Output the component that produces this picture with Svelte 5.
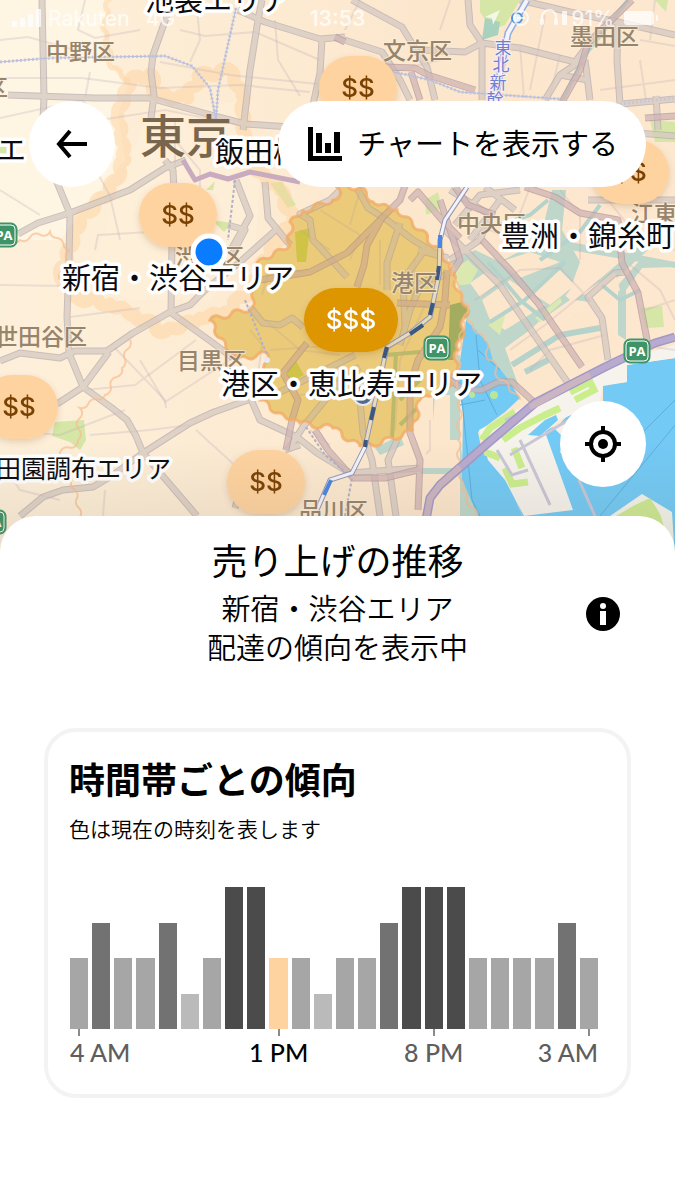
<script>
	const levels = [2, 3, 2, 2, 3, 1, 2, 4, 4, 2, 2, 1, 2, 2, 3, 4, 4, 4, 2, 2, 2, 2, 3, 2];
	const current = 9;
	const ticks = [
		{ hour: 0, label: '4 AM' },
		{ hour: 9, label: '1 PM' },
		{ hour: 16, label: '8 PM' },
		{ hour: 23, label: '3 AM' }
	];

	const pins = [
		{ x: 358, y: 88, text: '$$' },
		{ x: 178, y: 215, text: '$$' },
		{ x: 630, y: 172, text: '$$' },
		{ x: 19, y: 407, text: '$$' },
		{ x: 266, y: 482, text: '$$' },
		{ x: 351, y: 320, text: '$$$', hot: true }
	];

	const wards = [
		{ x: 46, y: 60, text: '中野区' },
		{ x: 383, y: 59, text: '文京区' },
		{ x: 570, y: 45, text: '墨田区' },
		{ x: -15, y: 96, text: '区' },
		{ x: 175, y: 265, text: '渋谷区' },
		{ x: 457, y: 232, text: '中央区' },
		{ x: 631, y: 222, text: '江東区' },
		{ x: 391, y: 291, text: '港区' },
		{ x: -5, y: 345, text: '世田谷区' },
		{ x: 177, y: 369, text: '目黒区' },
		{ x: 299, y: 519, text: '品川区' }
	];

	const areas = [
		{ x: 145, y: 11, text: '池袋エリア' },
		{ x: -3, y: 161, text: 'エ' },
		{ x: 215, y: 163, text: '飯田橋' },
		{ x: 501, y: 247, text: '豊洲・錦糸町' },
		{ x: 62, y: 289, text: '新宿・渋谷エリア' },
		{ x: 221, y: 395, text: '港区・恵比寿エリア' },
		{ x: -4, y: 478, text: '田園調布エリア', small: true }
	];

	const parkingAreas = [
		{ x: 4, y: 235 },
		{ x: 437, y: 348 },
		{ x: 637, y: 351 },
		{ x: -7, y: 522 }
	];

	const streets = [
		'M0 40 L28 37 L75 50 M85 0 L78 30 L95 38 L140 30 M90 72 L85 98 M100 120 L82 100 L0 118',
		'M0 78 L82 78 L160 88 L240 85 L310 92 M180 30 L205 36 L255 32 L320 60 M160 62 L230 75 L318 84',
		'M196 0 L200 40 L190 62 M275 20 L278 60 L300 96 M0 190 L40 215 M95 250 L98 235 L150 232',
		'M80 140 L110 196 L120 240 M100 120 L165 110 L235 124 M175 140 L200 170 L200 210',
		'M0 285 L66 286 M70 317 L140 308 M115 348 L165 400 L166 408 M85 390 L135 385 L196 340',
		'M140 360 L165 402 L245 350 M0 430 L60 435 L125 410 M90 435 L150 430 L190 425 M196 430 L240 470',
		'M105 490 L103 516 M0 460 L20 490 L60 500 M250 330 L262 345 L255 395 M175 120 L175 165',
		'M262 295 L270 265 L303 272 M265 320 L300 350 L340 355 M320 210 L360 235 L350 260',
		'M270 350 L340 345 M300 230 L330 250 M360 190 L350 225 M380 240 L380 285 M415 260 L412 310',
		'M390 310 L388 350 L370 400 M425 305 L400 360 L395 430 M300 395 L350 390 M310 430 L330 445',
		'M360 0 L345 30 M370 100 L400 70 L440 60 M450 0 L440 30 M500 65 L495 100 M520 45 L524 98',
		'M545 15 L530 90 M560 55 L550 95 M640 40 L675 46 M640 60 L646 100 M600 90 L675 80 M655 0 L650 40',
		'M530 187 L510 240 L480 225 M560 190 L580 215 L580 260 M600 190 L640 240 L675 250',
		'M475 300 L520 270 L560 268 L590 300 M510 350 L545 325 L600 280 M530 370 L550 350 L605 335 M430 420 L430 450 L426 454',
		'M630 265 L660 290 L675 320 M645 310 L675 300 M640 345 L675 350'
	];

	const roads = [
		'M42 0 L44 97 L43 120 M56 180 L70 214 L69 260 L67 317 L69 353 L83 387 L112 408 L127 420 L136 436 L143 453 L197 516',
		'M8 95 L95 98 L150 98 L200 112 L245 124 L290 127',
		'M169 0 L166 18 L153 55 L151 72 L154 95 L151 118',
		'M262 0 L258 20 L250 70 L243 130 M238 10 L265 22 L320 39 L345 37 M322 39 L320 73 L313 105',
		'M18 234 L38 223 L70 213 L130 190 L165 168 L186 160 M165 160 L173 170 L174 190 M172 240 L171 312',
		'M0 361 L20 353 L60 358 L75 351 L107 351 L133 333 L170 312 L190 305 L205 290 L240 262 L278 228',
		'M109 352 L83 387 L57 404 M170 312 L213 343 L233 358',
		'M143 453 L190 423 L214 412 L248 400 M20 516 L43 497 L63 490 L93 487 L113 475 L143 453',
		'M236 180 L250 216 L232 248 M265 182 L268 218 L290 245 M228 225 L245 230 L232 255',
		'M250 397 L260 420 L297 437 L317 453 L350 473 L420 468',
		'M340 190 L330 200 L300 214 L310 220 L313 240 L347 277 M357 188 L368 208 L387 220 L413 240 L447 260',
		'M250 307 L263 323 L280 325 L292 318 L303 327 M400 223 L387 263 L387 290 M427 247 L403 280 L405 327',
		'M418 250 L448 258 M446 275 L422 282 L410 310 L400 345 M360 367 L345 375 L325 400 L303 427 L288 450 M355 355 L335 365 L280 392',
		'M360 400 L363 433 L372 460 L380 516 M397 440 L388 460 L396 516 M300 445 L285 450',
		'M335 37 L382 52 L400 80 L410 100 M352 0 L402 27 L416 50 L427 67 L435 100',
		'M468 0 L470 25 L482 43 L482 100 M420 50 L465 52 L482 43 L520 48 L575 62 L588 45',
		'M618 20 L617 60 L620 104 M582 60 L560 75 L545 100 M585 60 L590 100 M560 75 L588 80',
		'M520 0 L570 12 L618 22 L675 35 M622 104 L675 99 M656 96 L658 130 M600 130 L675 136',
		'M442 227 L475 260 L500 285 L522 317 L545 350 L568 383 M588 200 L675 200',
		'M625 272 L615 273 L588 297 L602 318 L608 360 M455 225 L480 195 L520 190 M470 240 L500 200 M485 187 L515 210',
		'M235 508 L240 490 M450 190 L490 215 L480 240 L450 260'
	];

	const trunks = [
		'M407 180 L400 200 L382 218 L347 253 L310 272 L260 280',
		'M382 218 L367 245 L364 265 L357 287 M397 303 L450 305 M307 343 L283 373 L298 400 L292 420 L286 450',
		'M447 270 L445 300 L440 327 L418 360 L410 387 L410 433 L420 460 L418 510',
		'M315 430 L328 450 L353 478 L385 478 L418 470 M410 200 L418 192 L442 220 L460 238',
		'M385 67 L415 68 L428 75 L475 90 M411 72 L420 100 M335 37 L345 42',
		'M632 0 L588 43 L580 70 L562 102 M645 118 L675 116',
		'M525 187 L555 197 L580 213 L618 220 L622 263 L638 293 L648 345',
		'M482 240 L510 270 L538 303 L560 335 L582 367 M455 187 L468 205 L495 215 M440 200 L460 260 L450 275',
		'M445 377 L465 390 L482 390 L498 382 L512 382 L535 403'
	];

	// minato area outline, drawn with a scalloped edge
	const minato = [
		[337, 187], [333, 200], [303, 211], [290, 222], [290, 245], [257, 263], [252, 308], [210, 320],
		[220, 338], [237, 360], [267, 353], [262, 400], [277, 413], [300, 423], [333, 428], [360, 447],
		[382, 442], [413, 431], [420, 400], [452, 384], [458, 350], [467, 307], [457, 290], [450, 263],
		[420, 230], [397, 210], [373, 202], [360, 187]
	];
	const shinjuku = [
		[130, 80], [150, 74], [157, 95], [188, 98], [198, 76], [230, 70], [242, 95], [245, 160],
		[280, 190], [293, 220], [270, 250], [250, 290], [225, 312], [200, 318], [165, 332], [135, 315],
		[110, 304], [78, 298], [60, 275], [80, 220], [110, 190], [125, 160], [118, 115]
	];
	const west = [
		[110, -10], [104, 30], [112, 68], [130, 80]
	];
	const setagaya = [
		[60, 280], [70, 250], [50, 232], [20, 240], [-10, 245]
	];
	const southwest = [
		[130, 340], [122, 368], [105, 395], [80, 408], [78, 440], [60, 455], [75, 490], [82, 525]
	];
	const coast = [
		[450, 262], [458, 290], [468, 305], [460, 340], [458, 370], [460, 410], [458, 440], [462, 490], [482, 525]
	];
	const bay = [
		[467, 320], [485, 340], [489, 360], [503, 380], [520, 400]
	];

	function scallop(points, closed) {
		const list = closed ? [...points, points[0]] : points;
		let d = `M${list[0][0]} ${list[0][1]}`;
		for (let i = 1; i < list.length; i++) {
			const [x0, y0] = list[i - 1];
			const [x1, y1] = list[i];
			const n = Math.max(1, Math.round(Math.hypot(x1 - x0, y1 - y0) / 10));
			for (let k = 1; k <= n; k++) {
				d += ` A7 7 0 0 ${k % 2} ${x0 + ((x1 - x0) * k) / n} ${y0 + ((y1 - y0) * k) / n}`;
			}
		}
		return closed ? d + 'Z' : d;
	}

	function tickAlign(i) {
		if (i === 0) return 'start';
		return i === ticks.length - 1 ? 'end' : 'center';
	}
</script>

<svelte:head>
	<title>売り上げの推移</title>
</svelte:head>

<main>
	<section class="map-area">
		<svg class="map" viewBox="0 0 675 556" preserveAspectRatio="xMidYMid slice" role="img" aria-label="東京">
			<defs>
				<linearGradient id="land" x1="0" x2="1" y1="0" y2="0">
					<stop offset="0" stop-color="#fdf0da" />
					<stop offset="0.3" stop-color="#fdecd4" />
					<stop offset="0.65" stop-color="#fce7cd" />
					<stop offset="1" stop-color="#fce8cf" />
				</linearGradient>
				<linearGradient id="shade" x1="0" x2="0" y1="0" y2="1">
					<stop offset="0" stop-color="#6b5a4a" stop-opacity="0" />
					<stop offset="1" stop-color="#6b5a4a" stop-opacity="0.14" />
				</linearGradient>
				<filter id="drop" x="-20%" y="-20%" width="140%" height="150%">
					<feDropShadow dx="0" dy="3" stdDeviation="3" flood-color="#7a4a10" flood-opacity="0.2" />
				</filter>
				<clipPath id="minato-clip"><path d={scallop(minato, true)} /></clipPath>
			</defs>
			<rect width="675" height="556" fill="url(#land)" />
			<path d="M0 0H110L104 30L112 68L128 85L118 115L125 160L100 190L75 220L60 240L20 240L0 245Z" fill="#fef5e3" />
			<path d="M145 120L240 100L245 150L260 185L255 250L210 300L130 300L90 280L110 210Z" fill="#fef0d8" opacity="0.7" />

			<!-- parks -->
			<g fill="#d5e6a6">
				<path d="M480 0H520L505 25L492 30L480 12Z" />
				<path d="M485 18L500 22L498 35L482 40Z" fill="#a8d2bd" />
				<path d="M270 183L282 182L296 205L288 208Z M206 190L215 181L213 190Z M212 220L232 223L224 232Z" />
				<path d="M55 422L84 420L86 440L80 450L70 442L52 436Z" />
				<path d="M425 200L438 192L442 208L426 215Z M650 120L675 122V142H655Z M640 308L662 306L664 327L646 328Z" />
				<path d="M0 145L10 142L8 155L0 156Z M655 0L668 0L666 12Z" />
			</g>

			<!-- rivers and tinted port water -->
			<g fill="#bfd6ca">
				<path d="M450 262L475 250L500 262L540 240L552 190H566L562 230L580 262L570 290L562 300L530 330L505 348L520 390L500 380L488 345L466 320L460 290Z" />
				<path d="M500 335L560 290L570 300L505 345Z M520 360L575 325L600 330L570 345L530 375Z" />
				<path d="M574 315L590 322L600 335L590 345L580 330Z M575 300L640 245L648 250L590 302Z" />
				<path d="M618 285L640 260L675 262V267L642 268L626 290L626 340L618 335Z M560 240L675 262V268L570 250Z" />
				<path d="M433 355H460V520H480L465 480L460 440L433 440Z M395 350L402 440H396L390 350Z M380 355L415 350V355L380 360Z" />
				<path d="M375 448L400 435L404 445L380 455Z M420 468H455V474H420Z" />
			</g>
			<g fill="#fce6cc">
				<path d="M482 300L510 280L545 305L505 330L490 320Z M470 283L486 272L502 280L480 297Z M500 262L530 252L560 262L520 278Z M512 355L580 312L620 340L545 392L520 385Z M530 292L560 270L575 285L550 305Z M582 293L615 272L620 290L600 310Z M435 395H450V460H430Z" />
			</g>
			<g fill="#dbe9b0">
				<path d="M452 270L468 260L478 270L470 284L455 286Z M488 325L505 315L500 335Z" />
				<path d="M535 318L560 298L562 302L540 322Z" />
			</g>
			<g fill="none" stroke="#b5d3cb" stroke-width="4">
				<path d="M488 262L520 300L545 320 M565 262L525 300L490 322 M540 260L580 232L600 205 M602 285L620 300L640 290 M548 200L530 215L500 225" />
				<path d="M512 365L560 335L600 328 M525 372L548 360" stroke-width="6" />
				<path d="M628 0L585 55L560 105" />
			</g>

			<!-- open sea -->
			<g fill="#73caf5">
				<path d="M466 320L488 343L493 360L507 378L520 398L505 412L478 432L482 452L496 462L508 482L524 520V560H484L480 520L462 480L463 413L457 380L462 347Z" />
				<path d="M603 385L627 382V365L675 358V560H590L572 516L560 480L545 440L568 415L603 402Z" />
			</g>
			<path d="M508 480L530 435L560 425L600 445L625 520H524Z" fill="#73caf5" />
			<path d="M479 430L535 400L605 365L675 345V358L627 365V382L603 386L600 402L560 420L545 432L573 510L524 516L505 480L488 460Z" fill="#f6f3ec" />
			<path d="M553 427L566 440L560 452L590 480L600 460L590 430L575 418Z" fill="#f4f3ee" />
			<path d="M528 435L545 420L556 415L558 420L540 436Z" fill="#73caf5" />
			<path d="M610 516L642 494L672 512L675 560H600Z" fill="#f3f3ea" />
			<path d="M616 516L635 505L650 498L660 514L665 530H610Z" fill="#cdea93" />
			<g fill="none" stroke="#cbee8d" stroke-width="7">
				<path d="M482 440L490 428L515 412 M485 452L500 458 M503 440L520 428L545 415L560 408 M570 392L590 382L594 390L575 400 M505 468L512 484L528 482 M514 448L522 468" />
			</g>
			<g fill="none" stroke="#c9c6d6" stroke-width="3">
				<path d="M497 450L512 475L528 470 M520 440L550 505 M510 455L560 425L585 412 M505 420L530 410 M579 480L595 516" />
			</g>
			<g fill="none" stroke="#5eaedd" stroke-width="1">
				<path d="M476 335L480 380L497 415 M460 405L485 400 M462 400L472 500L480 516 M600 516L675 425 M635 440L675 400 M478 350L500 370" />
			</g>

			<!-- area overlays -->
			<g fill="none" stroke="#fdd3a0" stroke-opacity="0.5" stroke-width="13" stroke-linejoin="round">
				<path d={scallop(shinjuku, true)} />
				<path d={scallop(west, false)} stroke-width="5" />
			</g>
			<path d={scallop(minato, true)} fill="#f3dca0" />
			<g clip-path="url(#minato-clip)">
				<path d="M295 232L310 228L306 262L297 262Z M287 370L296 361L304 375L290 382Z" fill="#cdd25c" />
				<path d="M450 305L470 300L464 360L448 360Z" fill="#94b27c" />
				<path d="M385 355L420 352 M396 352L392 440 M420 380L400 400 M425 400L400 425" fill="none" stroke="#b5c48c" stroke-width="4" />
			</g>

			{#each streets as d}
				<path class="street" {d} />
			{/each}
			<g opacity="0.75">
				{#each roads as d}
					<path class="road-edge" {d} />
				{/each}
				{#each roads as d}
					<path class="road" {d} />
				{/each}
			</g>
			<g opacity="0.75">
				{#each trunks as d}
					<path class="road-edge trunk-edge" {d} />
				{/each}
				{#each trunks as d}
					<path class="road trunk" {d} />
				{/each}
			</g>
			<path d={scallop(minato, true)} fill="#d69a10" fill-opacity="0.26" stroke="#f3ab66" stroke-opacity="0.8" stroke-width="3" />
			<g fill="none" stroke="#f6bd92" stroke-opacity="0.7" stroke-width="2">
				<path d={scallop(setagaya, false)} />
				<path d={scallop(southwest, false)} />
				<path d={scallop(coast, false)} />
				<path d={scallop(bay, false)} />
			</g>

			<!-- expressways -->
			<g fill="none" stroke-linejoin="round">
				<path d="M426 520L430 498L440 485L488 443L535 403L570 385L605 367L655 343L675 337" stroke="#a298c4" stroke-width="9" />
				<path d="M426 520L430 498L440 485L488 443L535 403L570 385L605 367L655 343L675 337" stroke="#b8abcf" stroke-width="6" />
				<path d="M426 520L430 498L440 485L460 467 M530 407L570 385L590 375" stroke="#cbb5c2" stroke-width="6" />
				<path d="M183 160L195 180L210 174L228 179L250 172L300 182" stroke="#c9abc0" stroke-width="5" />
			</g>

			<!-- railways -->
			<g fill="none">
				<path d="M0 62L50 58L165 56L192 66L210 88L216 120 M236 8L218 90L216 120 M385 70L430 80L460 92L560 99 M620 104L675 98" stroke="#c6c8da" stroke-width="3" stroke-dasharray="2 2" />
				<path d="M0 62L50 58L165 56L192 66L210 88L216 120 M236 8L218 90L216 120 M385 70L430 80L460 92L560 99" stroke="#b8bee0" stroke-width="1" />
				<path d="M235 180L228 240 M245 300L267 355 M306 427L325 455L352 478L345 516" stroke="#b0b2c8" stroke-width="2" stroke-dasharray="3 2" />
				<path d="M527 0L508 33L495 100" stroke="#93aede" stroke-width="7" />
				<path d="M527 0L508 33L495 100" stroke="#f4f4fb" stroke-width="4" />
				<path d="M467 187L445 220L440 240L439 275L430 317L410 333L387 347L377 393L365 447L352 473L330 480L317 510" stroke="#9296b4" stroke-width="5" />
				<path d="M467 187L445 220L440 240" stroke="#f4f2fa" stroke-width="3" />
				<path d="M440 238L439 275L430 317L410 333L387 347L377 393L365 447" stroke="#eadbb8" stroke-width="3" />
				<path d="M365 447L352 473L330 480L317 510" stroke="#f4f2fa" stroke-width="3" />
				<path d="M439 266L437 280 M433 303L430 315 M423 325L410 334 M387 347L384 358 M374 407L371 420 M366 440L365 447" stroke="#3a5880" stroke-width="4" />
				<path d="M440 235V248 M331 480L324 495" stroke="#4c86e0" stroke-width="4" />
			</g>

			<circle cx="363" cy="395" r="10" fill="#516b8e" stroke="#e8eaf0" stroke-width="2" />
			<circle cx="267" cy="360" r="3" fill="#e6e8f2" />
			<circle cx="517" cy="18" r="5" fill="#eaf3fc" stroke="#4d94d8" stroke-width="2" />
			<circle cx="472" cy="395" r="3" fill="#b5e89a" />
			<circle cx="494" cy="395" r="4" fill="#b5e89a" />

			<g class="rail-name">
				<text x="503" y="54">東</text>
				<text x="501" y="71">北</text>
				<text x="498" y="89">新</text>
				<text x="495" y="106">幹</text>
			</g>

			{#each wards as w}
				<text class="ward" x={w.x} y={w.y}>{w.text}</text>
			{/each}
			<text class="city" x="140" y="153">東京</text>

			{#each parkingAreas as p}
				<g class="pa">
					<rect x={p.x - 13} y={p.y - 12} width="26" height="24" rx="6" />
					<rect class="ring" x={p.x - 11} y={p.y - 10} width="22" height="20" rx="4" />
					<text x={p.x} y={p.y + 5}>PA</text>
				</g>
			{/each}

			{#each pins as pin}
				<g class="pin" class:hot={pin.hot} filter="url(#drop)">
					<rect x={pin.x - (pin.hot ? 47 : 39)} y={pin.y - 32} width={pin.hot ? 94 : 78} height="64" rx="32" />
					<text x={pin.x} y={pin.y + 9}>{pin.text}</text>
				</g>
			{/each}
			<circle cx="209" cy="252" r="16" fill="#0a7cff" stroke="#fff" stroke-width="5" />

			{#each areas as a}
				<text class="area" class:small={a.small} x={a.x} y={a.y}>{a.text}</text>
			{/each}
			<rect y="440" width="675" height="116" fill="url(#shade)" />
		</svg>

		<div class="status">
			<svg class="signal" viewBox="0 0 30 18" aria-hidden="true">
				<rect x="0" y="12" width="5" height="6" rx="1" />
				<rect x="8" y="9" width="5" height="9" rx="1" />
				<rect x="16" y="5" width="5" height="13" rx="1" />
				<rect x="24" y="0" width="5" height="18" rx="1" />
			</svg>
			<span class="carrier">Rakuten</span>
			<span class="network">4G</span>
			<time>13:53</time>
			<div class="status-right">
				<svg width="86" height="20" viewBox="0 0 86 20" aria-hidden="true">
					<path d="M0 9L15 2L8 17L7 10Z" />
					<g fill="none" stroke="#fff" stroke-width="2">
						<circle cx="36" cy="10" r="7" />
						<path d="M32 10H40 M57 13V9A7 7 0 0 1 71 9V13" />
					</g>
					<rect x="55" y="10" width="4" height="7" rx="2" />
					<rect x="69" y="10" width="4" height="7" rx="2" />
					<rect x="77" y="3" width="5" height="14" rx="1" />
				</svg>
				<span class="percent">91%</span>
				<svg width="34" height="16" viewBox="0 0 34 16" aria-hidden="true">
					<rect x="0" y="1" width="30" height="14" rx="3" />
					<rect x="32" y="5" width="2" height="6" rx="1" />
				</svg>
			</div>
		</div>

		<nav class="actions">
			<button class="round" aria-label="戻る">
				<svg width="34" height="30" viewBox="0 0 34 30" fill="none" stroke="#000" stroke-width="4">
					<path d="M32 15H5 M15 2L4 15L15 28" />
				</svg>
			</button>
			<button class="pill">
				<svg width="34" height="34" viewBox="0 0 34 34" aria-hidden="true">
					<path d="M0 0H5V29H34V34H0Z" />
					<path d="M8 6H14V26H8Z M17 16H23V26H17Z M26 5H32V26H26Z" />
				</svg>
				<span>チャートを表示する</span>
			</button>
		</nav>

		<div class="locate">
			<button class="round" aria-label="現在地">
				<svg width="36" height="36" viewBox="0 0 36 36" fill="none" stroke="#000" stroke-width="4">
					<circle cx="18" cy="18" r="12" />
					<path d="M18 0V8 M18 28V36 M0 18H8 M28 18H36" />
					<circle cx="18" cy="18" r="5" fill="#000" stroke="none" />
				</svg>
			</button>
		</div>
	</section>

	<section class="sheet">
		<header>
			<div class="heading">
				<h1>売り上げの推移</h1>
				<p>新宿・渋谷エリア<br />配達の傾向を表示中</p>
			</div>
			<button class="info" aria-label="詳細">
				<svg width="34" height="34" viewBox="0 0 34 34">
					<circle cx="17" cy="17" r="17" />
					<circle cx="17" cy="9" r="3" fill="#fff" />
					<rect x="14" y="14" width="6" height="14" fill="#fff" />
				</svg>
			</button>
		</header>

		<article class="card">
			<h2>時間帯ごとの傾向</h2>
			<p>色は現在の時刻を表します</p>
			<div class="chart">
				<div class="bars">
					{#each levels as level, i}
						<div class="bar level-{level}" class:current={i === current} style="height: {level * 25}%"></div>
					{/each}
				</div>
				<div class="axis">
					{#each ticks as tick, i}
						<div class="tick" class:now={tick.hour === current} style="grid-column: {tick.hour + 1}">
							<i></i>
							<span class={tickAlign(i)}>{tick.label}</span>
						</div>
					{/each}
				</div>
			</div>
		</article>
	</section>
</main>

<style>
	:global(body) {
		background: #fff;
	}

	main {
		min-height: 100vh;
		overflow: hidden;
		color: #000;
		font-family: 'Noto Sans CJK JP', sans-serif;
	}

	button {
		display: flex;
		align-items: center;
		justify-content: center;
		padding: 0;
		border: 0;
		background: #fff;
		color: #000;
		font-family: inherit;
		cursor: pointer;
	}

	.map-area {
		position: relative;
		padding-bottom: 69px;
	}

	.map {
		position: absolute;
		inset: 0;
		width: 100%;
		height: 100%;
	}

	.street {
		fill: none;
		stroke: #b9a8b5;
		stroke-opacity: 0.26;
		stroke-width: 2;
	}

	.road,
	.road-edge {
		fill: none;
		stroke-linejoin: round;
		stroke: #d5c9c1;
		stroke-width: 5;
	}

	.road-edge {
		stroke: #b9aeb0;
		stroke-width: 7;
	}

	.trunk {
		stroke: #cfb5b4;
	}

	.trunk-edge {
		stroke: #b899a0;
	}

	.map text {
		font-family: 'Noto Sans CJK JP', sans-serif;
	}

	.map .ward {
		font-size: 23px;
		font-weight: 500;
		fill: #96846c;
		stroke: #fdf0dc;
		stroke-opacity: 0.6;
		stroke-width: 2;
		paint-order: stroke;
	}

	.map .city {
		font-size: 46px;
		font-weight: 500;
		fill: #79664e;
	}

	.map .area {
		font-size: 29px;
		font-weight: 400;
		fill: #0c0c10;
		stroke: #fff;
		stroke-width: 7;
		stroke-linejoin: round;
		paint-order: stroke;
	}

	.map .area.small {
		font-size: 25px;
	}

	.rail-name text {
		font-size: 17px;
		fill: #6f7fd0;
		stroke: #f8eef0;
		stroke-width: 2;
		paint-order: stroke;
		text-anchor: middle;
	}

	.pa rect {
		fill: #3f9467;
		stroke: #3f9467;
		stroke-width: 1;
	}

	.pa .ring {
		fill: none;
		stroke: #fff;
	}

	.map .pa text {
		font-family: 'Open Sans', sans-serif;
		font-size: 13px;
		font-weight: 700;
		fill: #fff;
		text-anchor: middle;
	}

	.pin rect {
		fill: #fed3a0;
	}

	.map .pin text {
		font-family: Inter, sans-serif;
		font-size: 26px;
		font-weight: 500;
		fill: #7a4206;
		text-anchor: middle;
	}

	.pin.hot rect {
		fill: #dd9503;
	}

	.map .pin.hot text {
		fill: #fff;
	}

	.status {
		position: relative;
		display: grid;
		grid-template-columns: auto auto auto 1fr auto;
		align-items: center;
		height: 36px;
		padding: 0 17px 0 12px;
		color: #fff;
		font-family: Inter, sans-serif;
		font-size: 21px;
		font-weight: 500;
		opacity: 0.75;
	}

	.status svg {
		fill: #fff;
	}

	.signal {
		width: 30px;
		height: 18px;
	}

	.carrier {
		margin-left: 6px;
	}

	.network {
		margin-left: 16px;
	}

	.status time {
		position: absolute;
		left: 0;
		right: 0;
		text-align: center;
		font-weight: 600;
	}

	.status-right {
		display: flex;
		align-items: center;
		grid-column: 5;
	}

	.percent {
		margin-right: 10px;
	}

	.actions {
		position: relative;
		display: flex;
		justify-content: space-between;
		margin-top: 65px;
		padding: 0 29px;
	}

	.round {
		width: 86px;
		height: 86px;
		border-radius: 50%;
	}

	.pill {
		gap: 15px;
		height: 86px;
		padding: 0 28px 0 30px;
		border-radius: 43px;
		font-size: 29px;
		white-space: nowrap;
	}

	.pill span {
		padding-bottom: 5px;
	}

	.locate {
		position: relative;
		display: flex;
		justify-content: flex-end;
		margin-top: 214px;
		padding: 0 29px;
	}

	.sheet {
		position: relative;
		margin-top: -40px;
		padding: 17px 44px 100px;
		border-radius: 36px 36px 0 0;
		background: #fff;
	}

	.sheet header {
		display: grid;
		grid-template-columns: 1fr auto 1fr;
		align-items: center;
	}

	.heading {
		grid-column: 2;
		text-align: center;
	}

	h1,
	h2,
	p {
		margin: 0;
	}

	h1 {
		font-size: 36px;
		font-weight: 400;
		line-height: 52px;
	}

	.heading p {
		margin-top: 3px;
		font-size: 29px;
		font-weight: 350;
		line-height: 39px;
	}

	.info {
		justify-self: end;
		margin-top: 28px;
		margin-right: 11px;
	}

	.card {
		margin-top: 62px;
		padding: 20px 29px 26px 21px;
		border: 4px solid #f3f3f3;
		border-radius: 32px;
	}

	h2 {
		font-size: 36px;
		font-weight: 700;
		line-height: 52px;
	}

	.card p {
		margin-top: 8px;
		font-size: 21px;
		font-weight: 350;
		line-height: 32px;
	}

	.chart {
		margin-top: 43px;
		padding-left: 1px;
	}

	.bars,
	.axis {
		display: grid;
		grid-template-columns: repeat(24, 1fr);
		column-gap: 4px;
	}

	.bars {
		align-items: end;
		height: 142px;
	}

	.level-1 {
		background: #bababa;
	}

	.level-2 {
		background: #a6a6a6;
	}

	.level-3 {
		background: #727272;
	}

	.level-4 {
		background: #4b4b4b;
	}

	.bar.current {
		background: #ffd3a0;
	}

	.tick {
		display: flex;
		flex-direction: column;
		align-items: center;
		min-width: 0;
		color: #5e5e5e;
		font-family: Lato, sans-serif;
		font-size: 25px;
		font-weight: 500;
		line-height: 32px;
	}

	.tick i {
		width: 2px;
		height: 7px;
		background: #8a8a8a;
	}

	.tick span {
		white-space: nowrap;
	}

	.tick .start {
		align-self: flex-start;
	}

	.tick .end {
		align-self: flex-end;
	}

	.now {
		color: #000;
	}
</style>
